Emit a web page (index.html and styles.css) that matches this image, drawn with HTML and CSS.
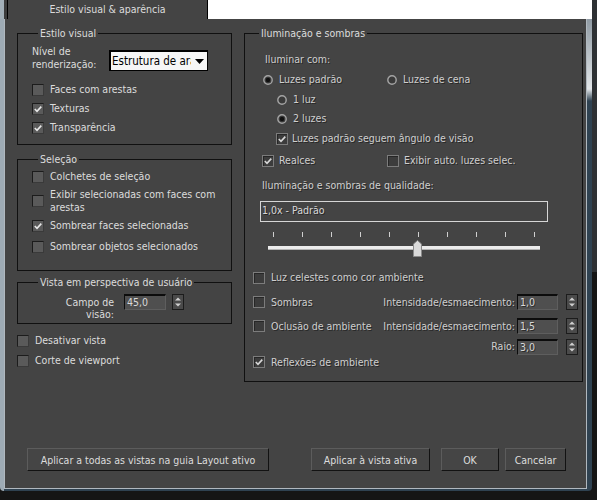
FILE: index.html
```html
<!DOCTYPE html>
<html lang="pt">
<head>
<meta charset="utf-8">
<link rel="stylesheet" href="styles.css">
</head>
<body>
<div class="window">
  <div class="tabrow">
    <div class="tab-lead"></div>
    <div class="tab">Estilo visual &amp; aparência</div>
    <div class="tab-rest"></div>
  </div>
  <div class="frame">
    <div class="page">
      <div class="columns">
        <div class="col-left">
          <div class="group g-visual">
            <div class="group-title">Estilo visual</div>
            <div class="render-row">
              <div class="render-label">Nível de<br>renderização:</div>
              <div class="dropdown">
                <span class="dd-text">Estrutura de ara</span>
                <span class="dd-arrow"><svg width="9" height="5" viewBox="0 0 9 5"><polygon points="0,0 9,0 4.5,5" fill="#000"/></svg></span>
              </div>
            </div>
            <div class="rows r-visual">
              <div class="row"><span class="cb"></span>Faces com arestas</div>
              <div class="row"><span class="cb"><svg width="10" height="10" viewBox="0 0 10 10"><path d="M1.8 5 L4 7.3 L8.3 2.6" fill="none" stroke="#e8e8e8" stroke-width="1.6"/></svg></span>Texturas</div>
              <div class="row"><span class="cb"><svg width="10" height="10" viewBox="0 0 10 10"><path d="M1.8 5 L4 7.3 L8.3 2.6" fill="none" stroke="#e8e8e8" stroke-width="1.6"/></svg></span>Transparência</div>
            </div>
          </div>

          <div class="group g-sel">
            <div class="group-title">Seleção</div>
            <div class="row s1"><span class="cb"></span>Colchetes de seleção</div>
            <div class="row s2"><span class="cb"></span><span class="two-line">Exibir selecionadas com faces com<br>arestas</span></div>
            <div class="row s3"><span class="cb"><svg width="10" height="10" viewBox="0 0 10 10"><path d="M1.8 5 L4 7.3 L8.3 2.6" fill="none" stroke="#e8e8e8" stroke-width="1.6"/></svg></span>Sombrear faces selecionadas</div>
            <div class="row s4"><span class="cb"></span>Sombrear objetos selecionados</div>
          </div>

          <div class="group g-persp">
            <div class="group-title">Vista em perspectiva de usuário</div>
            <div class="persp-row">
              <div class="persp-label">Campo de<br>visão:</div>
              <div class="num num-fov">45,0</div>
              <div class="spin"><svg width="10" height="14" viewBox="0 0 10 14"><polygon points="2,5.5 8,5.5 5,2.5" fill="#cfcfcf"/><polygon points="2,8.5 8,8.5 5,11.5" fill="#cfcfcf"/></svg></div>
            </div>
          </div>

          <div class="left-checks">
            <div class="row"><span class="cb"></span>Desativar vista</div>
            <div class="row"><span class="cb"></span>Corte de viewport</div>
          </div>
        </div>

        <div class="col-right">
          <div class="group g-light">
            <div class="group-title">Iluminação e sombras</div>
            <div class="illum-label">Iluminar com:</div>
            <div class="pair radio-main">
              <div class="opt"><span class="rb"><svg width="10" height="10" viewBox="0 0 10 10"><circle cx="5" cy="5" r="4.2" fill="#3a3a3a" stroke="#a4a4a4" stroke-width="1.4"/><circle cx="5" cy="5" r="2.2" fill="#101010"/></svg></span>Luzes padrão</div>
              <div class="opt"><span class="rb"><svg width="10" height="10" viewBox="0 0 10 10"><circle cx="5" cy="5" r="4.2" fill="#3a3a3a" stroke="#a4a4a4" stroke-width="1.4"/></svg></span>Luzes de cena</div>
            </div>
            <div class="opt sub-radio">
              <span class="rb"><svg width="10" height="10" viewBox="0 0 10 10"><circle cx="5" cy="5" r="4.2" fill="#3a3a3a" stroke="#a4a4a4" stroke-width="1.4"/></svg></span>1 luz
            </div>
            <div class="opt sub-radio r2">
              <span class="rb"><svg width="10" height="10" viewBox="0 0 10 10"><circle cx="5" cy="5" r="4.2" fill="#3a3a3a" stroke="#a4a4a4" stroke-width="1.4"/><circle cx="5" cy="5" r="2.2" fill="#101010"/></svg></span>2 luzes
            </div>
            <div class="opt follow">
              <span class="cb2"><svg width="10" height="10" viewBox="0 0 10 10"><path d="M1.8 5 L4 7.3 L8.3 2.6" fill="none" stroke="#d8d8d8" stroke-width="1.6"/></svg></span>Luzes padrão seguem ângulo de visão
            </div>
            <div class="pair pair-realces">
              <div class="opt"><span class="cb2"><svg width="10" height="10" viewBox="0 0 10 10"><path d="M1.8 5 L4 7.3 L8.3 2.6" fill="none" stroke="#d8d8d8" stroke-width="1.6"/></svg></span>Realces</div>
              <div class="opt"><span class="cb2"></span>Exibir auto. luzes selec.</div>
            </div>
            <div class="quality-label">Iluminação e sombras de qualidade:</div>
            <div class="quality-box">1,0x - Padrão</div>
            <div class="slider">
              <div class="ticks">
                <span class="tick"></span><span class="tick"></span><span class="tick"></span><span class="tick"></span><span class="tick"></span>
                <span class="tick"></span><span class="tick"></span><span class="tick"></span><span class="tick"></span><span class="tick"></span>
              </div>
              <div class="track"></div>
              <div class="thumb"><svg width="9" height="17" viewBox="0 0 9 17"><polygon points="0.5,4 4.5,0.5 8.5,4 8.5,16.5 0.5,16.5" fill="#d9d9d9" stroke="#8a8a8a" stroke-width="1"/></svg></div>
            </div>
            <div class="opt luz-row"><span class="cb2"></span>Luz celestes como cor ambiente</div>
            <div class="param-row shadow-row">
              <div class="opt"><span class="cb2"></span>Sombras</div>
              <div class="param">
                <span class="param-label">Intensidade/esmaecimento:</span>
                <span class="num">1,0</span>
                <span class="spin"><svg width="10" height="14" viewBox="0 0 10 14"><polygon points="2,5.5 8,5.5 5,2.5" fill="#cfcfcf"/><polygon points="2,8.5 8,8.5 5,11.5" fill="#cfcfcf"/></svg></span>
              </div>
            </div>
            <div class="param-row occl-row">
              <div class="opt"><span class="cb2"></span>Oclusão de ambiente</div>
              <div class="param">
                <span class="param-label">Intensidade/esmaecimento:</span>
                <span class="num">1,5</span>
                <span class="spin"><svg width="10" height="14" viewBox="0 0 10 14"><polygon points="2,5.5 8,5.5 5,2.5" fill="#cfcfcf"/><polygon points="2,8.5 8,8.5 5,11.5" fill="#cfcfcf"/></svg></span>
              </div>
            </div>
            <div class="param-row raio-row">
              <div class="param">
                <span class="param-label">Raio:</span>
                <span class="num">3,0</span>
                <span class="spin"><svg width="10" height="14" viewBox="0 0 10 14"><polygon points="2,5.5 8,5.5 5,2.5" fill="#cfcfcf"/><polygon points="2,8.5 8,8.5 5,11.5" fill="#cfcfcf"/></svg></span>
              </div>
            </div>
            <div class="opt refl-row"><span class="cb2"><svg width="10" height="10" viewBox="0 0 10 10"><path d="M1.8 5 L4 7.3 L8.3 2.6" fill="none" stroke="#d8d8d8" stroke-width="1.6"/></svg></span>Reflexões de ambiente</div>
          </div>
        </div>
      </div>

      <div class="buttons">
        <div class="btn b-all">Aplicar a todas as vistas na guia Layout ativo</div>
        <div class="btn b-active">Aplicar à vista ativa</div>
        <div class="btn b-ok">OK</div>
        <div class="btn b-cancel">Cancelar</div>
      </div>
    </div>
  </div>
</div>
</body>
</html>
```

FILE: styles.css
```css
* { box-sizing: border-box; }
html, body { margin: 0; padding: 0; }
body {
  width: 597px;
  height: 500px;
  overflow: hidden;
  background: linear-gradient(#2e3134 0, #2e3134 272px, #151515 272px);
  font-family: "DejaVu Sans Condensed", "DejaVu Sans", sans-serif;
  font-stretch: condensed;
  font-size: 10.5px;
  color: #dcdcdc;
}

.window {
  width: 592px;
  height: 491px;
  display: flex;
  flex-direction: column;
}

.tabrow { height: 19px; flex: none; display: flex; }
.tab-lead { width: 7px; background: linear-gradient(to right, #a2afb8 0, #a2afb8 4px, #3c3c3c 4px); }
.tab {
  width: 201px;
  background: #444;
  border-left: 1px solid #000;
  border-right: 1px solid #000;
  display: flex;
  align-items: center;
  justify-content: center;
  line-height: 13px;
}
.tab-rest { flex: 1; background: #fff; }

.frame {
  flex: 1;
  display: flex;
  padding: 0 5px 2px 4px;
  background:
    linear-gradient(to bottom, #8f9aa3 0, #e2e6e9 70px, #2f4251 82px) right top / 5px 100% no-repeat,
    linear-gradient(to right, #9eabb5 0, #9eabb5 4px, #2f4251 4px);
  border-radius: 0 0 4px 4px;
}

.page {
  flex: 1;
  display: flex;
  flex-direction: column;
  background: #444;
  border: 1px solid #b0b8bf;
  border-top: none;
  padding: 14px 3px 17px 12px;
}

.columns { display: flex; align-items: flex-start; gap: 12px; }
.col-left { width: 215px; display: flex; flex-direction: column; }
.col-right { flex: 1; }

.group { border: 1px solid #101010; }
.group-title {
  width: fit-content;
  height: 13px;
  line-height: 13px;
  margin: -7px 0 0 6px;
  padding: 0 2px;
  background: #444;
  color: #dcdcdc;
}

.row { display: flex; align-items: center; height: 19px; gap: 6px; line-height: 13px; white-space: nowrap; }

.cb {
  width: 12px;
  height: 12px;
  flex: none;
  background: #5a5a5a;
  border-top: 1px solid #1c1c1c;
  border-left: 1px solid #1c1c1c;
  border-right: 1px solid #3a3a3a;
  border-bottom: 1px solid #3a3a3a;
  display: flex;
  align-items: center;
  justify-content: center;
}
.cb svg { display: block; }

/* Estilo visual */
.g-visual { padding: 0 0 7px 14px; }
.render-row { display: flex; margin-top: 5px; }
.render-label { width: 77px; line-height: 13px; }
.dropdown {
  width: 99px;
  height: 21px;
  margin-top: 5px;
  background: #f6f6f6;
  border: 1px solid #000;
  border-top-width: 2px;
  border-left-width: 2px;
  display: flex;
  align-items: center;
  color: #000;
  font-size: 11.5px;
}
.dd-text { flex: 1; overflow: hidden; white-space: nowrap; padding-left: 1px; }
.dd-arrow { width: 16px; flex: none; display: flex; align-items: center; justify-content: center; }
.dd-arrow svg { display: block; }
.r-visual { margin-top: 9px; }

/* Seleção */
.g-sel { margin-top: 14px; padding: 0 0 14px 14px; }
.s1 { margin-top: 1px; }
.s2 { margin-top: 1px; height: 28px; }
.s3 { margin-top: 1px; }
.s4 { margin-top: 2px; }
.two-line { line-height: 13px; }

/* Perspectiva */
.g-persp { margin-top: 11px; padding: 0 0 3px 14px; }
.persp-row { display: flex; align-items: flex-start; margin-top: 5px; }
.persp-label { width: 82px; text-align: right; line-height: 12px; padding-top: 2px; }
.num {
  display: block;
  width: 41px;
  height: 16px;
  background: #4f4f4f;
  border-top: 2px solid #0c0c0c;
  border-left: 1px solid #0c0c0c;
  border-right: 1px solid #5e5e5e;
  border-bottom: 1px solid #5e5e5e;
  padding-left: 2px;
  line-height: 12px;
  color: #d8d8d8;
  flex: none;
}
.num-fov { margin-left: 10px; width: 42px; }
.spin {
  display: block;
  width: 12px;
  height: 16px;
  flex: none;
  background: #4a4a4a;
  border: 1px solid #1c1c1c;
}
.spin svg { display: block; }
.persp-row .spin { margin-left: 6px; }

.left-checks { margin-top: 7px; display: flex; flex-direction: column; gap: 1px; }

/* Iluminação */
.g-light {
  padding: 0 4px 12px 8px;
  color: #cfcfcf;
}
.g-light .opt,
.g-light .illum-label,
.g-light .quality-label,
.g-light .param-label,
.g-light .num,
.g-light .quality-box { text-shadow: 1px 1px 0 rgba(0, 0, 0, 0.45); }
.g-light .group-title { color: #dcdcdc; }

.opt { display: flex; align-items: center; height: 19px; gap: 6px; line-height: 13px; white-space: nowrap; }
.rb { width: 10px; height: 10px; flex: none; }
.rb svg { display: block; }
.cb2 {
  width: 12px;
  height: 12px;
  flex: none;
  background: #3c3c3c;
  border: 1px solid #7c7c7c;
  box-shadow: inset 1px 1px 0 #262626;
  display: flex;
  align-items: center;
  justify-content: center;
}
.cb2 svg { display: block; }

.illum-label { margin: 13px 0 0 12px; height: 13px; line-height: 13px; }
.pair { display: grid; grid-template-columns: 124px auto; }
.radio-main { margin: 4px 0 0 10px; }
.sub-radio { margin: 1px 0 0 24px; }
.sub-radio.r2 { margin-top: 0; }
.follow { margin: 1px 0 0 23px; gap: 4px; }
.pair-realces { margin: 3px 0 0 9px; grid-template-columns: 125px auto; }
.pair-realces .opt { gap: 5px; }
.quality-label { margin: 9px 0 0 9px; height: 13px; line-height: 13px; }
.quality-box {
  margin: 9px 0 0 7px;
  width: 288px;
  height: 21px;
  border: 1px solid #d6d6d6;
  line-height: 17px;
  padding-left: 1px;
  color: #d8d8d8;
}

.slider { position: relative; margin: 10px 0 0 15px; width: 272px; height: 26px; }
.ticks { display: flex; justify-content: space-between; padding: 0 5px; margin-top: 1px; height: 5px; }
.tick { width: 1px; height: 5px; background: #cfcfcf; }
.track { margin-top: 9px; height: 4px; background: #ececec; border-bottom: 1px solid #b5b5b5; }
.thumb { position: absolute; left: 145px; top: 8px; width: 9px; height: 17px; }
.thumb svg { display: block; }

.luz-row { margin-top: 10px; }
.param-row { display: flex; align-items: center; height: 18px; }
.param { display: flex; align-items: center; margin-left: auto; }
.param-label { line-height: 13px; white-space: nowrap; }
.param .num { margin-left: 2px; }
.param .spin { margin-left: 8px; }
.shadow-row { margin-top: 6px; }
.occl-row { margin-top: 6px; }
.raio-row { margin-top: 3px; height: 17px; }
.refl-row { height: 14px; }

/* Buttons */
.buttons { margin-top: auto; display: flex; height: 23px; padding-left: 10px; }
.btn {
  height: 23px;
  display: flex;
  align-items: center;
  justify-content: center;
  background: #454545;
  border: 1px solid;
  border-color: #5c5c5c #121212 #121212 #5c5c5c;
  color: #dcdcdc;
  white-space: nowrap;
}
.b-all { width: 242px; }
.b-active { width: 119px; margin-left: 42px; }
.b-ok { width: 58px; margin-left: 11px; }
.b-cancel { width: 61px; margin-left: 6px; }
```
